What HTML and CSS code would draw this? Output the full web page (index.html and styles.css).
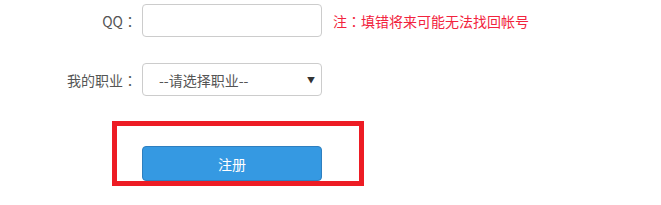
FILE: index.html
```html
<!DOCTYPE html>
<html lang="zh-CN">
<head>
    <meta charset="UTF-8">
    <title>注册</title>
    <link rel="stylesheet" href="styles.css">
</head>
<body>
    <form class="reg-form">
        <div class="form-row">
            <label class="form-label">QQ<span class="colon" lang="zh-TW">：</span></label>
            <input class="form-input" type="text">
            <span class="form-tip">注<span class="colon" lang="zh-TW">：</span>填错将来可能无法找回帐号</span>
        </div>
        <div class="form-row">
            <label class="form-label">我的职业<span class="colon" lang="zh-TW">：</span></label>
            <div class="form-select">
                <span>--请选择职业--</span>
                <span class="arrow">▼</span>
            </div>
        </div>
        <div class="submit-box">
            <button type="button" class="btn-submit">注册</button>
        </div>
    </form>
</body>
</html>
```

FILE: styles.css
```css
body {
    margin: 0;
    background: #fff;
    font-family: "Noto Sans CJK SC", "Microsoft YaHei", sans-serif;
    font-size: 14px;
    color: #555;
}
.colon {
    font-family: "Noto Sans CJK TC", sans-serif;
}
.reg-form {
    padding-top: 4px;
}
.form-row {
    display: flex;
    align-items: center;
    height: 33px;
    margin-bottom: 26px;
}
.form-label {
    width: 137px;
    text-align: right;
    margin-right: 5px;
    color: #555;
}
.form-input {
    box-sizing: border-box;
    width: 180px;
    height: 33px;
    border: 1px solid #ccc;
    border-radius: 4px;
    padding: 0 8px;
    margin: 0;
}
.form-tip {
    margin-left: 11px;
    color: #f2233d;
}
.form-select {
    box-sizing: border-box;
    width: 180px;
    height: 33px;
    border: 1px solid #ccc;
    border-radius: 4px;
    display: flex;
    align-items: center;
    justify-content: space-between;
    padding: 0 6px 0 16px;
    color: #555;
}
.form-select .arrow {
    font-size: 8px;
    color: #333;
}
.submit-box {
    box-sizing: border-box;
    width: 252px;
    height: 65px;
    margin: -1px 0 0 112px;
    border: 5px solid #ed1c24;
    padding: 20px 0 0 25px;
}
.btn-submit {
    box-sizing: border-box;
    width: 180px;
    height: 35px;
    background: #3599e2;
    border: 1px solid #2e7fbf;
    border-radius: 4px;
    color: #fff;
    font-family: inherit;
    font-size: 14px;
    cursor: pointer;
    display: block;
}
```
